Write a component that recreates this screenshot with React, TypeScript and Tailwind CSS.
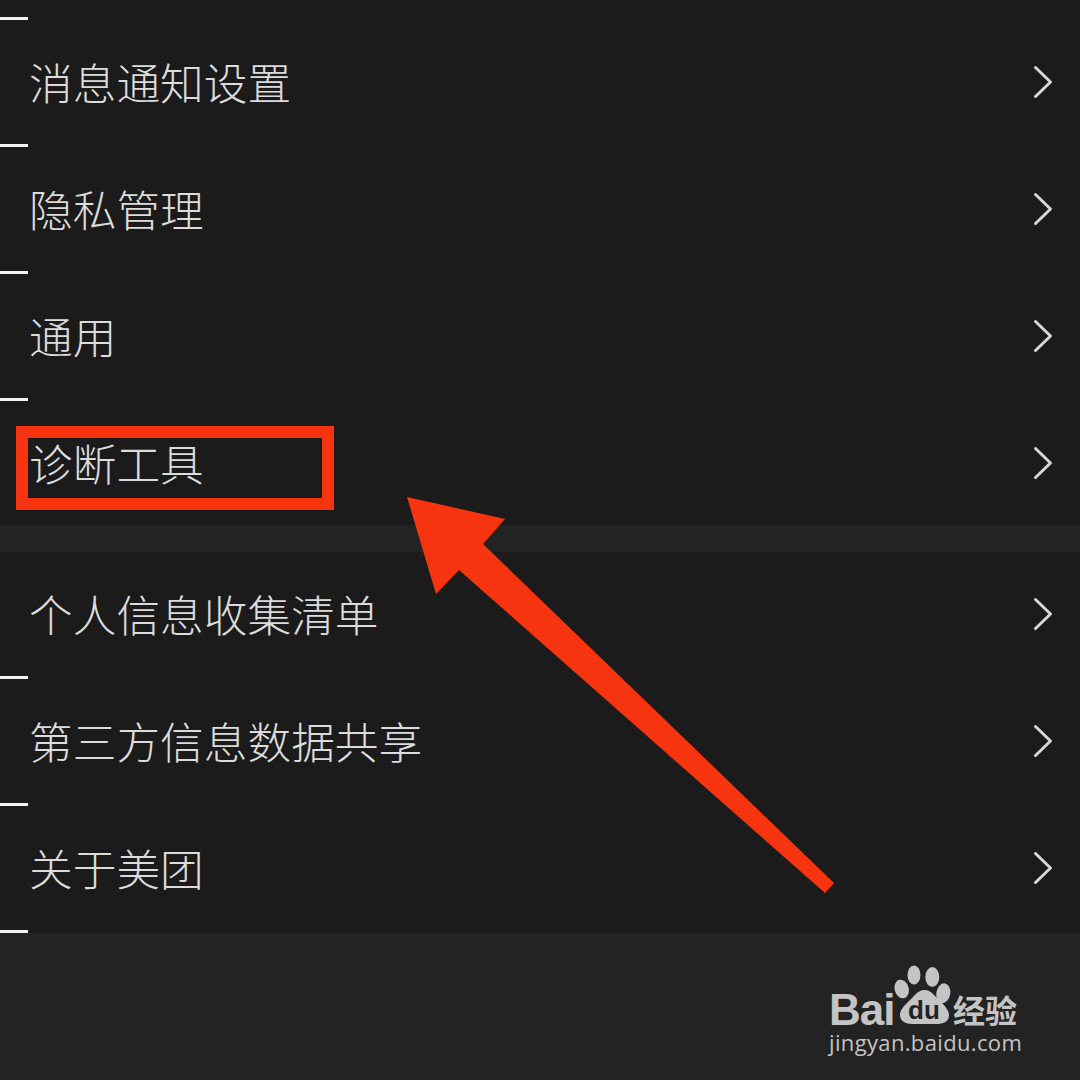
import React from "react";

const firstGroup = ["消息通知设置", "隐私管理", "通用", "诊断工具"];
const secondGroup = ["个人信息收集清单", "第三方信息数据共享", "关于美团"];

const Tick = () => <div className="w-[28px] h-[3px] bg-[#f2f2f2]" />;

const Row = ({ label }: { label: string }) => (
  <div className="h-[124px] pl-[29px] pr-[27px] flex items-center justify-between">
    <span className="text-[43.7px] leading-none font-light text-[#dcdcdc]">{label}</span>
    <svg width="20" height="34" viewBox="0 0 20 34" fill="none">
      <path d="M2.5 2.5L17.5 17L2.5 31.5" stroke="#d6d6d6" strokeWidth="3" strokeLinecap="round" strokeLinejoin="round" />
    </svg>
  </div>
);

const Paw = () => (
  <div className="relative w-[60px] h-[61px] shrink-0">
    <svg width="60" height="61" viewBox="0 0 60 61" fill="#c4c4c4">
      <ellipse cx="21" cy="10" rx="6.5" ry="9.5" />
      <ellipse cx="39.3" cy="12" rx="7" ry="10" />
      <ellipse cx="8.7" cy="24" rx="7" ry="9.5" transform="rotate(-15 8.7 24)" />
      <ellipse cx="50.3" cy="28.3" rx="7" ry="10" transform="rotate(10 50.3 28.3)" />
      <path d="M31.5 25C39 25 42 32 48 37C53 42 56 46 56 50C56 57 50 59 44 59L19 59C12 59 7 56 7 50C7 45 11 41 15 37C21 32 24 25 31.5 25Z" />
    </svg>
    <span className="absolute left-[15px] top-[33px] font-['Liberation_Sans',sans-serif] font-bold text-[26px] leading-[24px] text-[#232323]">du</span>
  </div>
);

const Watermark = () => (
  <div className="absolute left-[829px] top-[965px] w-[200px] flex flex-col gap-[3px] text-[#c4c4c4]">
    <div className="flex items-end">
      <span className="w-[64px] font-['Liberation_Sans',sans-serif] font-bold text-[44px] leading-[32px] tracking-[-1px]">Bai</span>
      <Paw />
      <span className="font-bold text-[32px] leading-[32px] pb-[1px]">经验</span>
    </div>
    <span className="font-['Open_Sans',sans-serif] text-[22px] leading-[26px] tracking-[0.35px] whitespace-nowrap">jingyan.baidu.com</span>
  </div>
);

export default function App() {
  return (
    <div className="relative w-[1080px] h-[1080px] overflow-hidden bg-[#1b1b1b] font-['Noto_Sans_CJK_SC',sans-serif]">
      <div className="h-[17px]" />
      <Tick />
      {firstGroup.map((label, i) => (
        <React.Fragment key={label}>
          <Row label={label} />
          {i < firstGroup.length - 1 && <Tick />}
        </React.Fragment>
      ))}
      <div className="h-[27px] bg-[#232323]" />
      {secondGroup.map((label) => (
        <React.Fragment key={label}>
          <Row label={label} />
          <Tick />
        </React.Fragment>
      ))}
      <div className="h-[147px] bg-[#232323]" />

      {/* red annotation */}
      <div className="absolute left-[16px] top-[426px] w-[318px] h-[84px] border-[12px] border-[#f63510]" />
      <svg className="absolute left-0 top-0" width="1080" height="1080" viewBox="0 0 1080 1080">
        <polygon points="407,497 505,519 483,544 834,883 825,893 459,570 436,594" fill="#f63510" />
      </svg>

      <Watermark />
    </div>
  );
}
